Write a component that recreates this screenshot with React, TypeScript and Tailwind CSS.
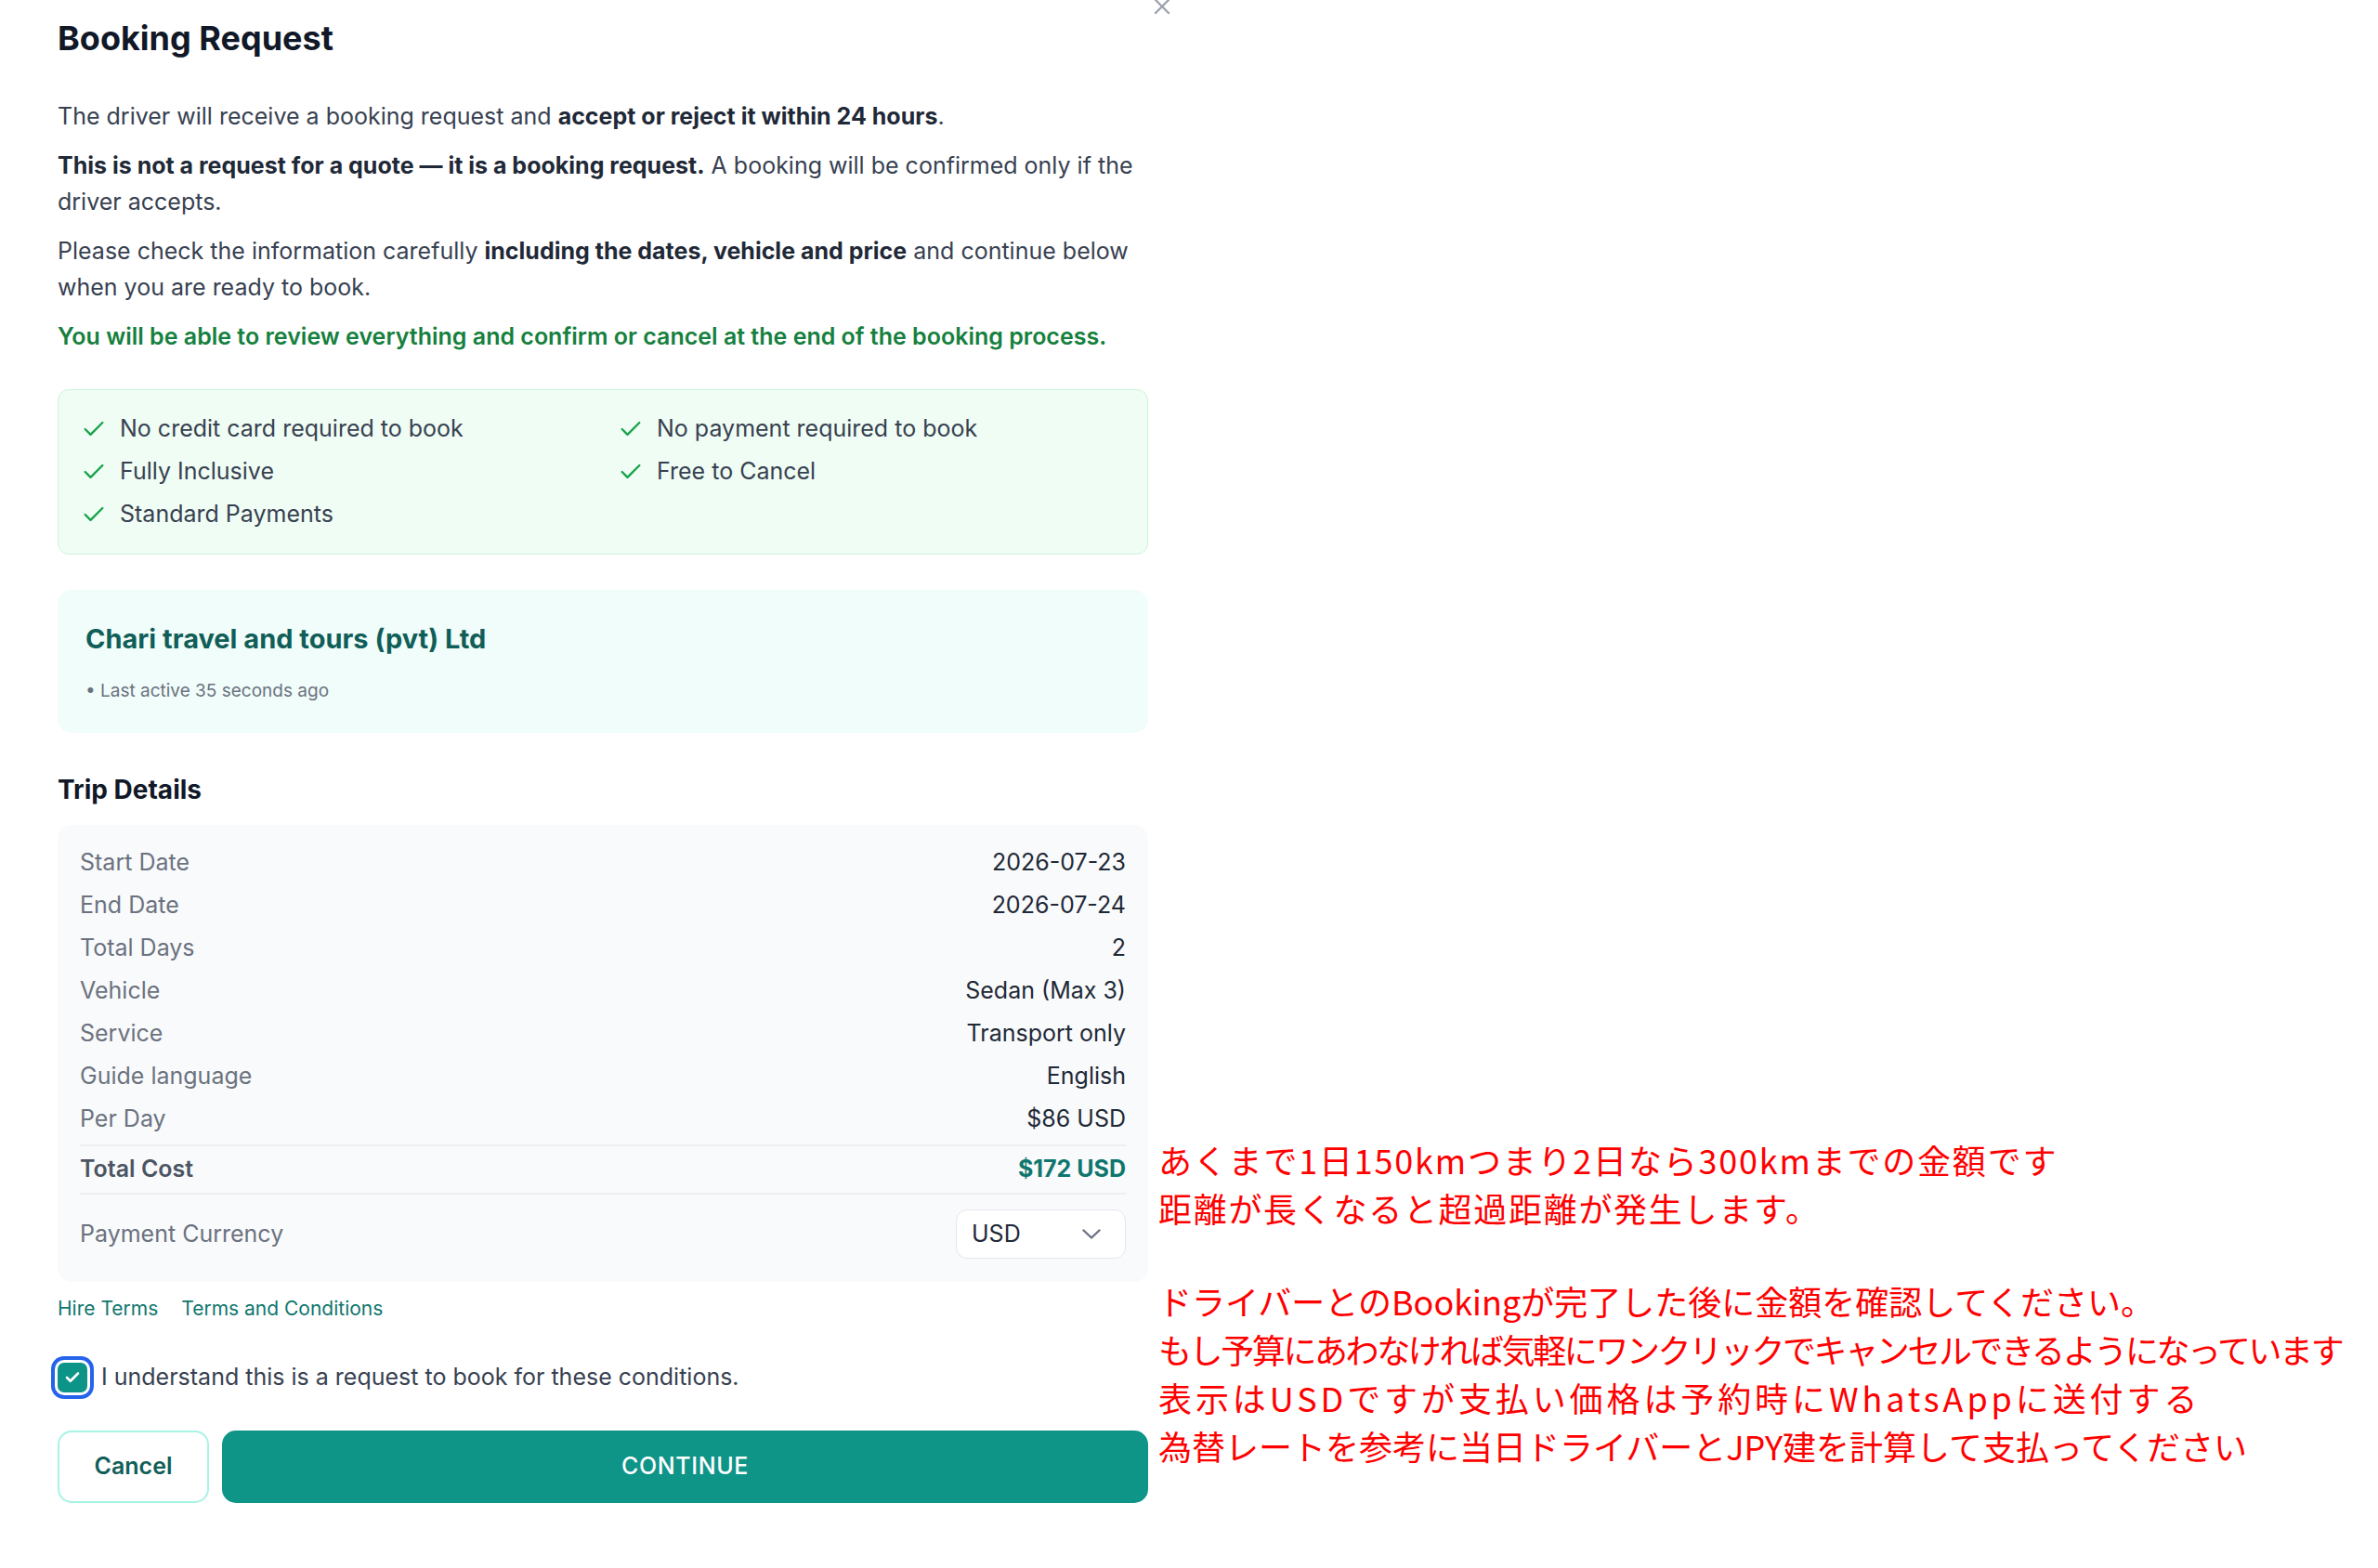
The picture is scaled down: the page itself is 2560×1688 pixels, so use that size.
import React from "react";
import { Check, X } from "lucide-react";

const perks = [
  "No credit card required to book",
  "No payment required to book",
  "Fully Inclusive",
  "Free to Cancel",
  "Standard Payments",
];

const tripRows: [string, string][] = [
  ["Start Date", "2026-07-23"],
  ["End Date", "2026-07-24"],
  ["Total Days", "2"],
  ["Vehicle", "Sedan (Max 3)"],
  ["Service", "Transport only"],
  ["Guide language", "English"],
  ["Per Day", "$86 USD"],
];

export default function App() {
  return (
    <div className="min-h-screen bg-white flex font-['Inter',sans-serif]">
      {/* Booking modal column */}
      <div className="relative w-[1236px] shrink-0 pl-[62px] pt-[17px] pb-[60px]">
        <button className="absolute left-[1237px] top-[-7px] text-[#9ca3af]">
          <X size={28} strokeWidth={2} />
        </button>

        <div className="w-[1174px]">
          <h1 className="text-[36px] leading-[48px] font-bold text-[#111827]">Booking Request</h1>

          <div className="mt-[41px] flex flex-col gap-[14px] text-[25px] leading-[39px] text-[#374151]">
            <p>
              The driver will receive a booking request and{" "}
              <span className="font-bold text-[#1f2937]">accept or reject it within 24 hours</span>.
            </p>
            <p>
              <span className="font-bold text-[#1f2937]">
                This is not a request for a quote — it is a booking request.
              </span>{" "}
              A booking will be confirmed only if the driver accepts.
            </p>
            <p>
              Please check the information carefully{" "}
              <span className="font-bold text-[#1f2937]">including the dates, vehicle and price</span> and
              continue below when you are ready to book.
            </p>
            <p className="font-semibold text-[#15803d]">
              You will be able to review everything and confirm or cancel at the end of the booking process.
            </p>
          </div>

          {/* Perks */}
          <div className="mt-[37px] grid grid-cols-2 gap-x-[32px] gap-y-[10px] rounded-[12px] border border-[#cbf5da] bg-[#f0fdf4] p-[24px]">
            {perks.map((p) => (
              <div key={p} className="flex h-[36px] items-center gap-[14px] text-[25px] text-[#374151]">
                <Check size={28} strokeWidth={2} className="text-[#16a34a] shrink-0" />
                <span>{p}</span>
              </div>
            ))}
          </div>

          {/* Driver */}
          <div className="mt-[38px] rounded-[15px] bg-[#f0fdfa] px-[30px] pt-[30px] pb-[32px]">
            <div className="text-[29px] leading-[45px] font-bold text-[#115e59]">Chari travel and tours (pvt) Ltd</div>
            <div className="mt-[20px] text-[19px] leading-[27px] text-[#6b7280]">• Last active 35 seconds ago</div>
          </div>

          {/* Trip details */}
          <h2 className="mt-[41px] text-[28px] leading-[40px] font-bold text-[#111827]">Trip Details</h2>
          <div className="mt-[18px] rounded-[15px] bg-[#f9fafb] px-[24px] pt-[23px] pb-[25px]">
            <div className="flex flex-col gap-[10px]">
              {tripRows.map(([k, v]) => (
                <div key={k} className="flex h-[36px] items-center justify-between text-[25px]">
                  <span className="text-[#6b7280]">{k}</span>
                  <span className="text-[#1f2937]">{v}</span>
                </div>
              ))}
            </div>
            <div className="mt-[9px] flex h-[54px] items-center justify-between border-y-2 border-[#eceef1] text-[25px]">
              <span className="font-semibold text-[#4b5563]">Total Cost</span>
              <span className="font-bold text-[#0f766e]">$172 USD</span>
            </div>
            <div className="mt-[16px] flex items-center justify-between">
              <span className="text-[25px] text-[#6b7280]">Payment Currency</span>
              <div className="flex h-[53px] w-[183px] items-center justify-between rounded-[12px] border border-[#e5e7eb] bg-white pl-[16px] pr-[26px] text-[25px] text-[#1f2937]">
                <span>USD</span>
                <svg width="20" height="11" viewBox="0 0 20 11" fill="none">
                  <path d="M1.5 1.5 10 9.5l8.5-8" stroke="#6b7280" strokeWidth="2.4" strokeLinecap="round" strokeLinejoin="round" />
                </svg>
              </div>
            </div>
          </div>

          {/* Terms */}
          <div className="mt-[13px] flex gap-[25px] text-[21px] leading-[31px] text-[#0f766e]">
            <a href="#">Hire Terms</a>
            <a href="#">Terms and Conditions</a>
          </div>

          <label className="mt-[41px] flex h-[36px] items-center gap-[15px] text-[25px] text-[#374151]">
            <span className="flex h-[32px] w-[32px] shrink-0 items-center justify-center rounded-[7px] bg-[#0d9488] ring-4 ring-[#2563eb] ring-offset-[3px] ring-offset-white">
              <svg width="18" height="18" viewBox="0 0 24 24" fill="none">
                <path d="M20 6 9 17l-5-5" stroke="white" strokeWidth="3.5" strokeLinecap="round" strokeLinejoin="round" />
              </svg>
            </span>
            I understand this is a request to book for these conditions.
          </label>

          <div className="mt-[39px] flex h-[78px] gap-[14px]">
            <button className="w-[163px] rounded-[15px] border-2 border-[#a7f3e6] bg-white text-[25px] font-semibold text-[#115e59]">
              Cancel
            </button>
            <button className="flex-1 rounded-[15px] bg-[#0f9488] text-[25px] font-medium tracking-wide text-white">
              CONTINUE
            </button>
          </div>
        </div>
      </div>

      {/* Annotations */}
      <div className="pl-[11px] pt-[1222px] font-['Noto_Sans_CJK_JP',sans-serif] text-[36px] leading-[52px] text-[#ff0000] whitespace-nowrap">
        <div className="tracking-[1.8px]">あくまで1日150kmつまり2日なら300kmまでの金額です</div>
        <div className="tracking-[1.7px]">距離が長くなると超過距離が発生します。</div>
        <div className="mt-[48px]">
          <div>ドライバーとのBookingが完了した後に金額を確認してください。</div>
          <div className="tracking-[-2.4px]">もし予算にあわなければ気軽にワンクリックでキャンセルできるようになっています</div>
          <div className="tracking-[3.9px]">表示はUSDですが支払い価格は予約時にWhatsAppに送付する</div>
          <div>為替レートを参考に当日ドライバーとJPY建を計算して支払ってください</div>
        </div>
      </div>
    </div>
  );
}
